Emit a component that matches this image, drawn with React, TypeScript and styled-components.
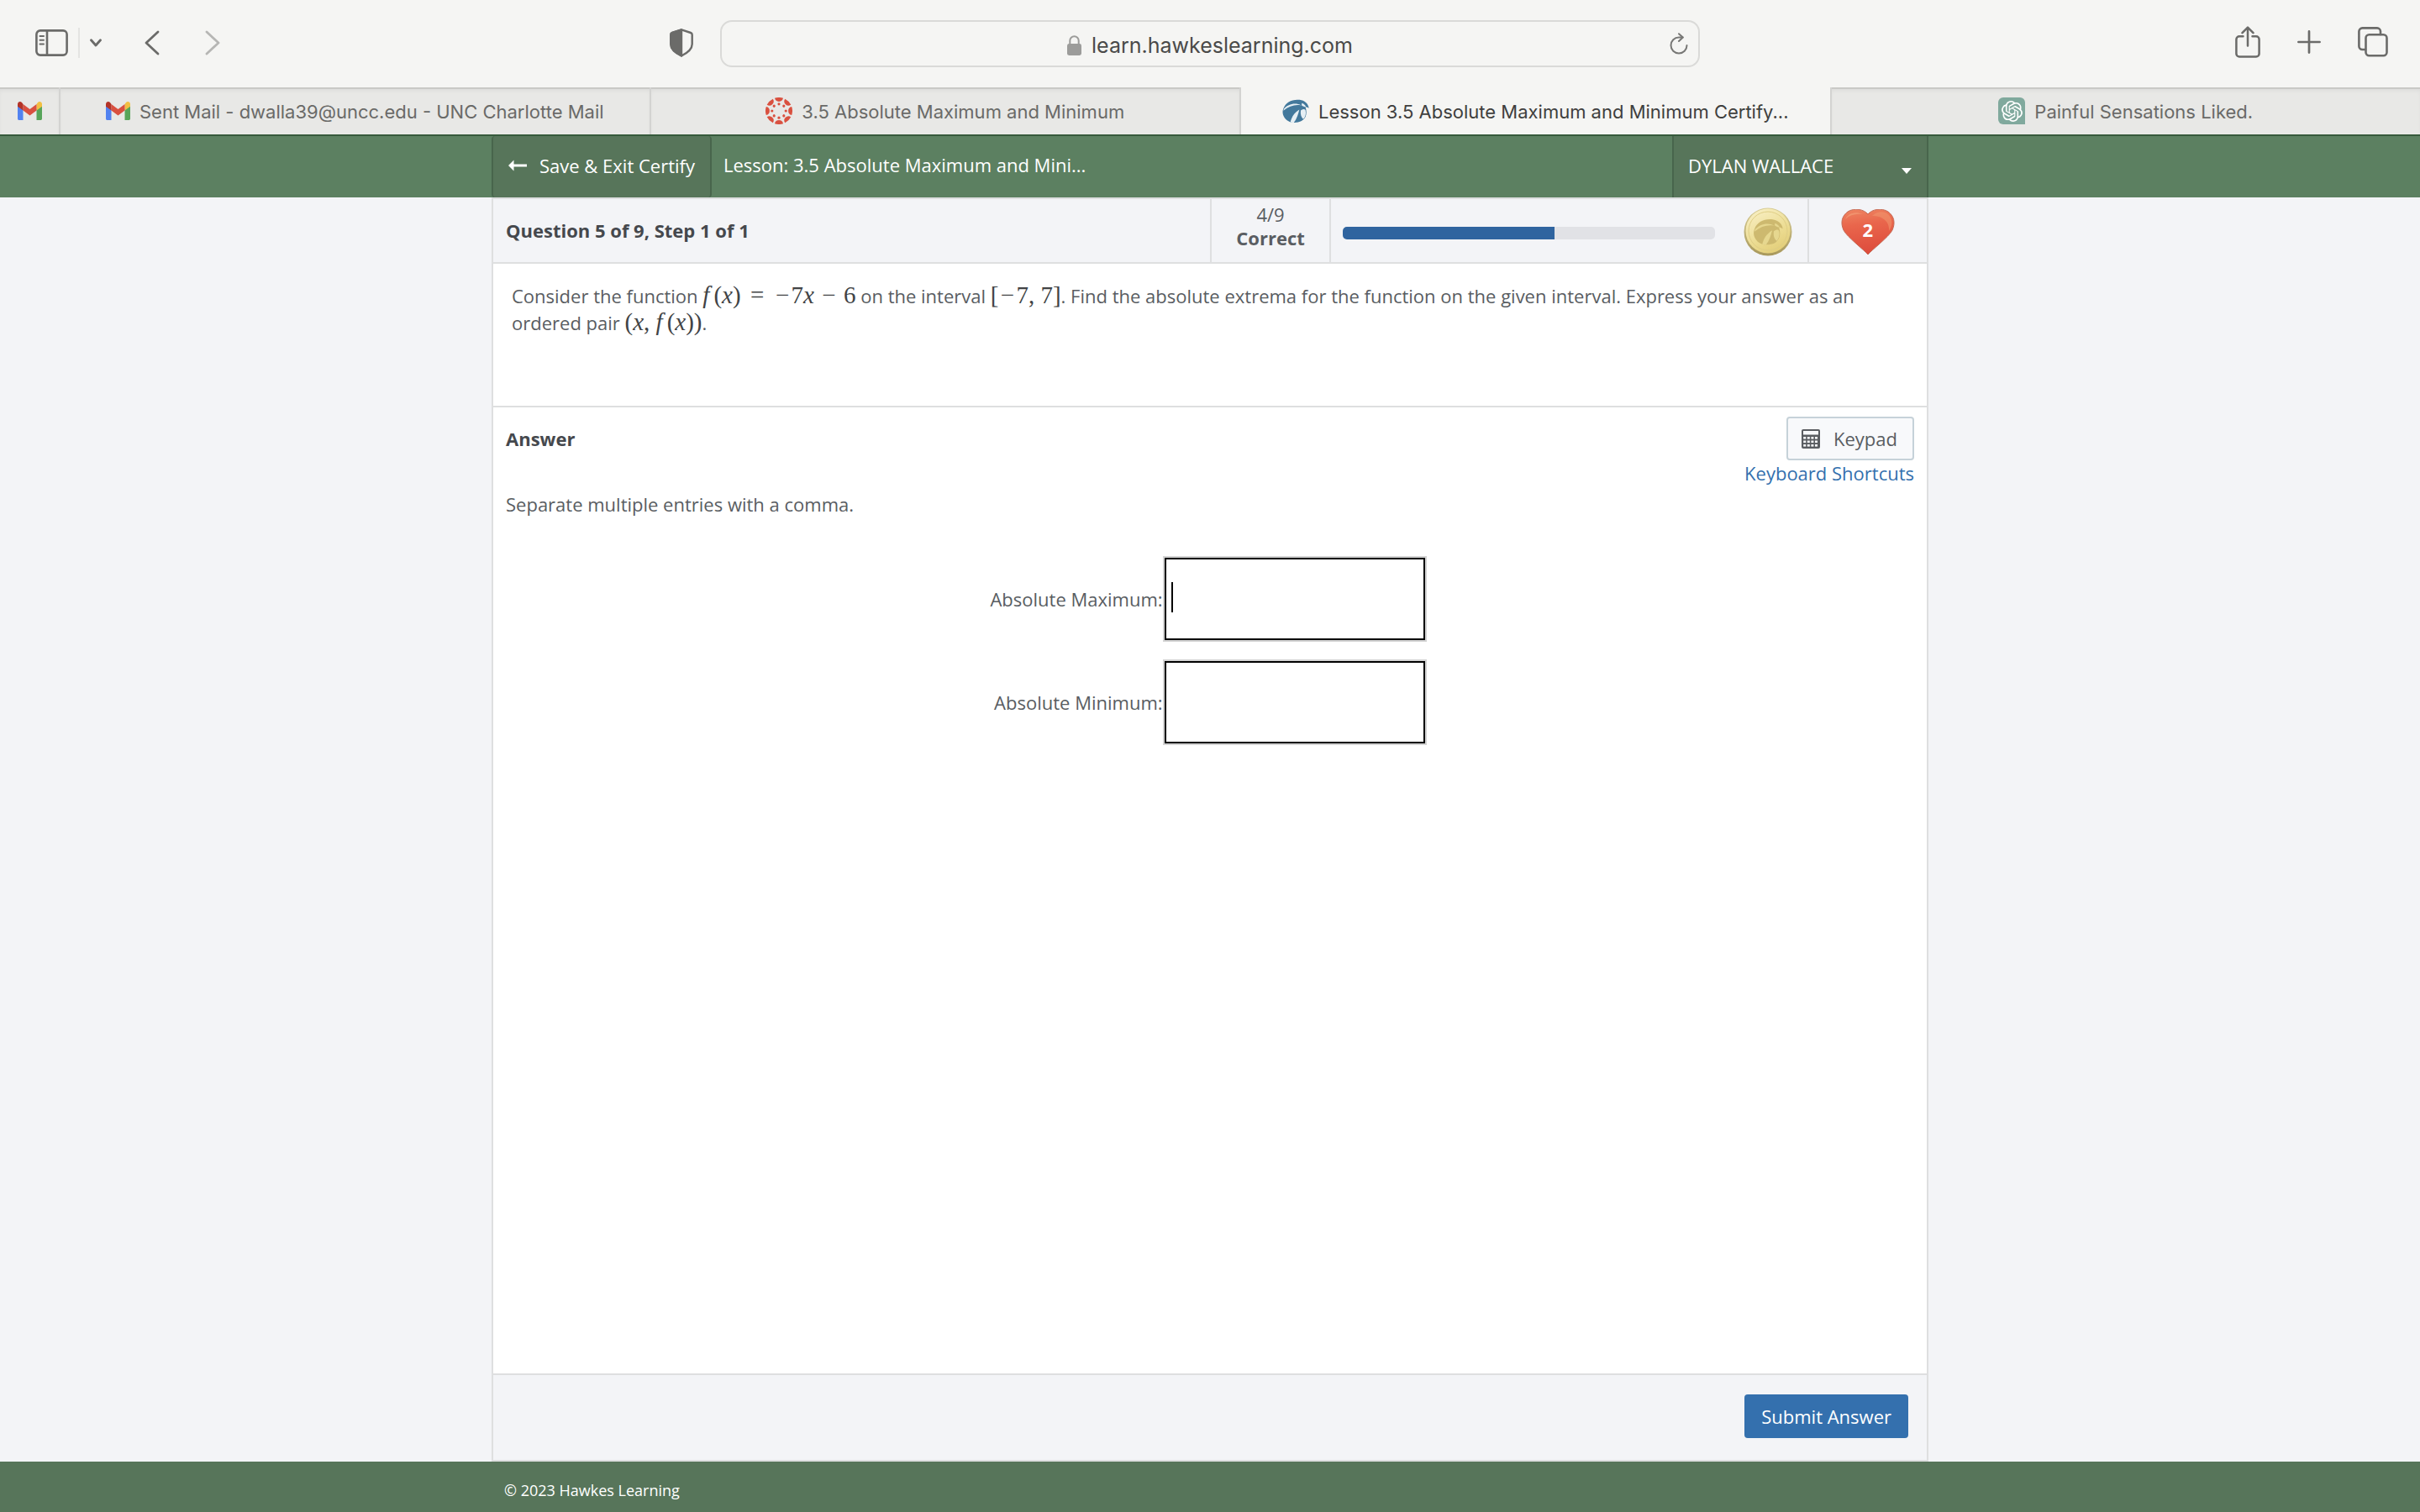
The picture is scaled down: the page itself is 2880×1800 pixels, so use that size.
import React, { useId } from "react";
import styled, { createGlobalStyle, css } from "styled-components";
import { SiOpenai } from "react-icons/si";

const color = {
  chrome: "#f5f5f3",
  tab: "#e8e8e6",
  chromeLine: "#d3d3d1",
  chromeIcon: "#6b6b69",
  green: "#5c8061",
  darkGreen: "#57755a",
  greenLine: "#48654c",
  page: "#f3f4f7",
  line: "#dedfe0",
  text: "#595d62",
  strong: "#45484d",
  link: "#3470ae",
};

const uiFont = `Inter, "Liberation Sans", sans-serif`;
const bodyFont = `"Open Sans", "Noto Sans", sans-serif`;

const GlobalStyle = createGlobalStyle`
  *, *::before, *::after { box-sizing: border-box; }
  body { margin: 0; background: ${color.page}; }
  button, input { font: inherit; color: inherit; }
  svg { display: block; flex: none; }
`;

const Page = styled.div`
  display: flex;
  flex-direction: column;
  min-height: 100vh;
  font-family: ${bodyFont};
  font-size: 22px;
  line-height: 32px;
  color: ${color.text};
`;

/* ---------- browser chrome ---------- */

const Toolbar = styled.header`
  display: grid;
  grid-template-columns: 1fr minmax(0, 1166px) 1fr;
  align-items: center;
  height: 104px;
  background: ${color.chrome};
  color: ${color.chromeIcon};
`;

const ToolGroup = styled.div<{ $end?: boolean }>`
  display: flex;
  align-items: center;
  justify-content: ${(p) => (p.$end ? "flex-end" : "flex-start")};
  gap: ${(p) => (p.$end ? "44px" : "0")};
  padding: ${(p) => (p.$end ? "0 38px 4px 0" : "0 32px 2px 42px")};
`;

const IconButton = styled.button<{ $space?: number; $push?: boolean }>`
  display: flex;
  padding: 0;
  border: 0;
  background: none;
  color: inherit;
  margin-left: ${(p) => (p.$push ? "auto" : `${p.$space ?? 0}px`)};
`;

const ToolDivider = styled.span`
  width: 2px;
  height: 36px;
  margin-left: 12px;
  background: #e4e4e2;
`;

const AddressBar = styled.div`
  display: grid;
  grid-template-columns: 1fr auto 1fr;
  align-items: center;
  height: 56px;
  padding: 0 12px;
  border: 2px solid #dadad8;
  border-radius: 14px;
  font-family: ${uiFont};
  font-size: 25px;
  color: #4a4a49;
`;

const Address = styled.span`
  display: flex;
  align-items: center;
  gap: 12px;
  grid-column: 2;
  padding-top: 3px;
`;

const ReloadSlot = styled.span`
  display: flex;
  justify-content: flex-end;
  color: #777775;
`;

const TabBar = styled.nav`
  display: flex;
  height: 56px;
  background: ${color.tab};
  font-family: ${uiFont};
  font-size: 22px;
`;

const Tab = styled.a<{ $pinned?: boolean; $active?: boolean }>`
  display: flex;
  align-items: center;
  justify-content: center;
  gap: 11px;
  min-width: 0;
  flex: ${(p) => (p.$pinned ? "0 0 72px" : "1 1 0")};
  border-right: 2px solid ${color.chromeLine};
  color: #6a6a68;
  text-decoration: none;
  white-space: nowrap;
  box-shadow: inset 0 2px 0 #c9c9c6, inset 0 5px 4px -1px #dcdcda;
  &:last-child { border-right: 0; }
  ${(p) =>
    p.$active &&
    css`
      background: ${color.chrome};
      box-shadow: none;
      color: #3f3f3e;
    `}
`;

const TabTitle = styled.span`
  padding-top: 2px;
`;

const ChatBadge = styled.span`
  display: flex;
  align-items: center;
  justify-content: center;
  width: 32px;
  height: 32px;
  border-radius: 6px 6px 0 6px;
  background: #80a99d;
  color: #fff;
`;

/* ---------- lesson header ---------- */

const column = css`
  width: 100%;
  max-width: 1710px;
  margin: 0 auto;
`;

const LessonBar = styled.div`
  background: ${color.green};
  border-top: 2px solid #365a3c;
  color: #fff;
`;

const LessonRow = styled.div`
  ${column}
  display: flex;
  height: 73px;
`;

const ExitButton = styled.button`
  display: flex;
  align-items: center;
  gap: 15px;
  padding: 0 18px 4px;
  border: 2px solid ${color.greenLine};
  border-width: 0 2px;
  border-radius: 4px;
  background: ${color.darkGreen};
`;

const LessonTitle = styled.h1`
  flex: 1;
  margin: 0;
  padding: 18px 14px;
  font-size: inherit;
  font-weight: 400;
`;

const UserMenu = styled.button`
  display: flex;
  align-items: center;
  justify-content: space-between;
  flex: 0 0 305px;
  padding: 0 18px 4px 17px;
  border: 2px solid ${color.greenLine};
  border-width: 0 2px;
  background: ${color.darkGreen};
`;

const Caret = styled.span`
  margin-top: 14px;
  border: 6px solid transparent;
  border-top: 7px solid #fff;
  border-bottom: 0;
`;

/* ---------- question panel ---------- */

const Panel = styled.main`
  ${column}
  display: flex;
  flex-direction: column;
  flex: 1;
  border: 2px solid ${color.line};
  background: #fff;
`;

const StatusRow = styled.div`
  display: grid;
  grid-template-columns: 6fr 1fr 4fr 1fr;
  height: 77px;
  border-bottom: 2px solid ${color.line};
  background: ${color.page};
`;

const StatusCell = styled.div<{ $center?: boolean }>`
  display: flex;
  align-items: center;
  justify-content: ${(p) => (p.$center ? "center" : "space-between")};
  padding: 0 14px;
  border-left: 2px solid ${color.line};
  &:first-child {
    border-left: 0;
    padding: 0 15px 2px;
  }
`;

const Heading = styled.h2`
  margin: 0;
  font-size: inherit;
  font-weight: 700;
  color: ${color.strong};
`;

const Score = styled.div`
  padding-bottom: 12px;
  text-align: center;
  line-height: 28px;
`;

const ScoreLabel = styled.strong`
  display: block;
`;

const Track = styled.div`
  flex: 1;
  height: 15px;
  margin: 6px 34px 0 0;
  border-radius: 5px;
  background: #e1e2e6;
  overflow: hidden;
`;

const Fill = styled.div`
  height: 100%;
  background: #2f649f;
`;

const CoinSlot = styled.span`
  margin: 3px 4px 0 0;
`;

const HeartSlot = styled.span`
  display: grid;
  place-items: center;
  padding-top: 3px;
  > * { grid-area: 1 / 1; }
  color: #fff;
`;

const HeartCount = styled.strong`
  padding-bottom: 6px;
`;

const Prompt = styled.p`
  min-height: 171px;
  margin: 0;
  padding: 22px;
  border-bottom: 2px solid ${color.line};
`;

const MathText = styled.span`
  font-family: "Liberation Serif", serif;
  font-size: 29px;
  line-height: 1;
  color: #414345;
  white-space: nowrap;
`;

const Fn = styled.i`
  margin-right: 5px;
`;

const Sign = styled.span<{ $gap?: number }>`
  display: inline-block;
  width: 21px;
  margin: 0 ${(p) => p.$gap ?? 0}px;
  text-align: center;
`;

const AnswerArea = styled.section`
  flex: 1;
  padding: 11px 15px;
`;

const AnswerHead = styled.div`
  display: flex;
  justify-content: space-between;
  align-items: flex-start;
  min-height: 86px;
`;

const AnswerTitle = styled(Heading)`
  padding-top: 10px;
`;

const Tools = styled.div`
  display: flex;
  flex-direction: column;
  align-items: flex-end;
`;

const KeypadButton = styled.button`
  display: flex;
  align-items: center;
  gap: 16px;
  height: 52px;
  padding: 0 18px 0 16px;
  border: 2px solid #c6d2d9;
  border-radius: 4px;
  background: #f8f9fb;
`;

const Link = styled.a`
  line-height: 30px;
  color: ${color.link};
  text-decoration: none;
`;

const Hint = styled.p`
  margin: 2px 0 46px;
`;

const Fields = styled.form`
  display: grid;
  grid-template-columns: max-content 314px;
  justify-content: center;
  align-items: center;
  row-gap: 21px;
  padding-right: 4px;
`;

const FieldLabel = styled.label`
  text-align: right;
`;

const FieldBox = styled.span`
  position: relative;
  display: flex;
`;

const Field = styled.input`
  width: 100%;
  height: 102px;
  padding: 0 8px;
  border: 2px solid #d3d3d3;
  border-radius: 0;
  outline: 2px solid #000;
  outline-offset: -4px;
  background: #fff;
`;

const TextCursor = styled.span`
  position: absolute;
  left: 10px;
  top: 31px;
  width: 2px;
  height: 36px;
  background: #000;
`;

const SubmitRow = styled.div`
  display: flex;
  justify-content: flex-end;
  align-items: center;
  height: 103px;
  padding: 0 22px 4px;
  border-top: 2px solid ${color.line};
  background: ${color.page};
`;

const SubmitButton = styled.button`
  height: 52px;
  padding: 0 20px;
  border: 0;
  border-radius: 4px;
  background: ${color.link};
  color: #fff;
`;

const Footer = styled.footer`
  background: ${color.darkGreen};
  color: #fff;
  font-size: 18px;
`;

const FooterText = styled.div`
  ${column}
  height: 60px;
  padding: 18px 15px;
`;

/* ---------- drawings ---------- */

const stroke = {
  fill: "none",
  stroke: "currentColor",
  strokeLinecap: "round" as const,
  strokeLinejoin: "round" as const,
};

const SidebarIcon = () => (
  <svg width="39" height="32" viewBox="0 0 39 32" {...stroke} strokeWidth="2.6">
    <rect x="1.4" y="1.4" width="36.2" height="29.2" rx="4.5" />
    <path d="M14 1.5v29" />
    <path d="M5.5 8h4.5M5.5 12.7h4.5M5.5 17.4h4.5" strokeWidth="2" />
  </svg>
);

const ChevronDown = () => (
  <svg width="14" height="10" viewBox="0 0 14 10" {...stroke} strokeWidth="2.8">
    <path d="M1.5 1.8 7 8l5.500-6.200" />
  </svg>
);

const Chevron = ({ forward = false }: { forward?: boolean }) => (
  <svg width="18" height="30" viewBox="0 0 18 30" {...stroke} strokeWidth="2.8" opacity={forward ? 0.45 : 1}>
    <path d={forward ? "M2 2l14 13L2 28" : "M16 2 2 15l14 13"} />
  </svg>
);

const ShieldIcon = () => (
  <svg width="28" height="34" viewBox="0 0 28 34" {...stroke} strokeWidth="2.4">
    <path d="M14 1.400 25 5c1.200.4 1.700 1 1.700 2.300v11.200c0 5.500-4.200 9.800-12.700 14-8.500-4.200-12.700-8.500-12.700-14V7.300C1.300 6 1.800 5.400 3 5z" />
    <path d="M14 1.400v31.100C5.500 28.300 1.300 24 1.300 18.500V7.300C1.300 6 1.800 5.400 3 5z" fill="currentColor" />
  </svg>
);

const LockIcon = () => (
  <svg width="17" height="24" viewBox="0 0 17 24" fill="#9c9c9a">
    <rect x="0" y="10" width="17" height="14" rx="2.400" />
    <path d="M3.300 11V6.500a5.200 5.200 0 0 1 10.400 0V11" fill="none" stroke="#9c9c9a" strokeWidth="2" />
  </svg>
);

const ReloadIcon = () => (
  <svg width="22" height="26" viewBox="0 0 22 26" {...stroke} strokeWidth="2">
    <path d="M20.500 15a9.500 9.500 0 1 1-9.500-9.500h4.500" />
    <path d="M11 1.200l4.800 4.300L11 10" />
  </svg>
);

const ShareIcon = () => (
  <svg width="30" height="38" viewBox="0 0 30 38" {...stroke} strokeWidth="2.500">
    <path d="M9.500 12.300H5a3.600 3.600 0 0 0-3.600 3.600v17A3.600 3.600 0 0 0 5 36.500h20a3.600 3.600 0 0 0 3.600-3.600v-17a3.600 3.600 0 0 0-3.600-3.600h-4.500" />
    <path d="M15 23.500V2M8.500 8.200 15 1.600l6.500 6.600" />
  </svg>
);

const PlusIcon = () => (
  <svg width="28" height="28" viewBox="0 0 28 28" {...stroke} strokeWidth="2.700">
    <path d="M14 1.400v25.200M1.400 14h25.200" />
  </svg>
);

const OverviewIcon = () => (
  <svg width="36" height="36" viewBox="0 0 36 36" {...stroke} strokeWidth="2.600">
    <rect x="9.500" y="9.300" width="25" height="25" rx="4" />
    <path d="M9 27H5.400a4 4 0 0 1-4-4V5.400a4 4 0 0 1 4-4H23a4 4 0 0 1 4 4V9" />
  </svg>
);

const GmailIcon = () => (
  <svg width="29" height="22" viewBox="0 0 29 22">
    <path d="M0 4v16.200c0 1 .8 1.800 1.800 1.800h4.700V9z" fill="#5282f0" />
    <path d="M29 4v16.200c0 1-.8 1.800-1.800 1.800h-4.700V9z" fill="#57a55a" />
    <path d="M22.500 3v7.600L29 5.800V3.100C29 .3 26-.8 24 .9z" fill="#f2bf42" />
    <path d="M6.500 10.600V3L14.500 9l8-6v7.600l-8 6z" fill="#d95040" />
    <path d="M0 3.100v2.700l6.500 4.800V3L5 .9C3-.8 0 .3 0 3.100z" fill="#b33428" />
  </svg>
);

const CanvasIcon = () => (
  <svg width="32" height="32" viewBox="0 0 32 32" fill="#d9503f">
    {[0, 45, 90, 135, 180, 225, 270, 315].map((angle) => (
      <g key={angle} transform={`rotate(${angle} 16 16)`}>
        <path d="M11 .8A16 16 0 0 1 21 .8 5.100 5.100 0 0 1 11 .8z" />
        <circle cx="16" cy="7.800" r="1.600" />
      </g>
    ))}
  </svg>
);

const HawkShape = ({ dark, light }: { dark: string; light: string }) => (
  <g>
    <path
      d="M28 81C8 74-4 52 4 33 12 11 35-1 62 2c17 2 31 13 33 30-5-4-9-5-12-4 6 20 3 36-9 46-6 5-11 7-18 8-9 2-19 2-28-1z"
      fill={dark}
    />
    <path d="M29 82c4-18 14-34 32-45-4 15-9 33-20 47z" fill={light} />
    <path d="M66 40c8-6 14-6 17-1 3 12 0 24-8 32-7-6-11-16-9-31z" fill={light} />
    <path d="M6 34c14-16 40-24 62-12-22-4-44 2-64 19z" fill={light} />
    <path d="M70 14c8 3 13 8 15 14-6-1-11-3-16-7z" fill={light} />
  </g>
);

const HawkIcon = () => (
  <svg width="32" height="29" viewBox="0 0 96 86">
    <HawkShape dark="#43799c" light="#e6eff4" />
  </svg>
);

const Coin = () => {
  const id = useId();
  return (
    <svg width="58" height="58" viewBox="0 0 58 58" role="img" aria-label="Mastery coin">
      <defs>
        <linearGradient id={`${id}rim`} x1="0" y1="0" x2="0" y2="1">
          <stop offset="0" stopColor="#d8cd96" />
          <stop offset="1" stopColor="#a8985c" />
        </linearGradient>
        <linearGradient id={`${id}face`} x1="0.200" y1="0" x2="0.700" y2="1">
          <stop offset="0" stopColor="#f8efc4" />
          <stop offset="0.600" stopColor="#ecdc92" />
          <stop offset="1" stopColor="#e2cd77" />
        </linearGradient>
      </defs>
      <circle cx="29" cy="29" r="28.500" fill={`url(#${id}rim)`} />
      <circle cx="29" cy="28" r="26.500" fill={`url(#${id}face)`} />
      <circle cx="29" cy="28" r="23" fill="none" stroke="#dfce86" />
      <g transform="translate(11.500 13.500) scale(.37)">
        <HawkShape dark="#cdb96f" light="#e6d78f" />
      </g>
    </svg>
  );
};

const Heart = () => {
  const id = useId();
  return (
    <svg width="64" height="55" viewBox="0 0 64 55" aria-hidden="true">
      <defs>
        <linearGradient id={id} x1="0.200" y1="0" x2="0.350" y2="1">
          <stop offset="0" stopColor="#ee8360" />
          <stop offset="0.350" stopColor="#e9664c" />
          <stop offset="1" stopColor="#dd4b3c" />
        </linearGradient>
      </defs>
      <path
        d="M32 54C28 49 7 33 3 25-1 16 1 8 8 3c8-5 19-3 24 3 5-6 16-8 24-3 7 5 9 13 5 22-4 8-25 24-29 29z"
        fill={`url(#${id})`}
        stroke="#c46a55"
        strokeWidth="1"
      />
      <path d="M37 8c6-6 15-6 20-1 5 6 4 13 0 19 1-9-5-18-20-18z" fill="#f0946c" opacity="0.600" />
      <path d="M5 12C8 5 17 2 26 6 17 5 10 7 5 12z" fill="#f4a37c" opacity="0.600" />
    </svg>
  );
};

const ArrowLeft = () => (
  <svg width="22" height="14" viewBox="0 0 22 14" fill="currentColor">
    <path d="M0 7l6.500-6.500V5.400H22v3.200H6.500v4.900z" />
  </svg>
);

const CalculatorIcon = () => (
  <svg width="22" height="23" viewBox="0 0 22 23">
    <rect x="0" y="0" width="22" height="23" rx="2" fill="#5a5d61" />
    <rect x="2" y="2" width="18" height="4.500" fill="#f8f9fb" />
    {[9, 13.500, 18].map((y) =>
      [2.200, 6.800, 11.400, 16].map((x) => (
        <rect key={`${x}-${y}`} x={x} y={y} width="3" height="2.600" fill="#f8f9fb" />
      )),
    )}
  </svg>
);

/* ---------- page ---------- */

const answers = [
  { id: "absolute-maximum", label: "Absolute Maximum:", active: true },
  { id: "absolute-minimum", label: "Absolute Minimum:", active: false },
];

const progress = 57;

export default function App() {
  return (
    <Page>
      <GlobalStyle />
      <Toolbar>
        <ToolGroup>
          <IconButton aria-label="Show sidebar"><SidebarIcon /></IconButton>
          <ToolDivider />
          <IconButton $space={12} aria-label="Tab groups"><ChevronDown /></IconButton>
          <IconButton $space={51} aria-label="Back"><Chevron /></IconButton>
          <IconButton $space={54} aria-label="Forward"><Chevron forward /></IconButton>
          <IconButton $push aria-label="Privacy report"><ShieldIcon /></IconButton>
        </ToolGroup>
        <AddressBar>
          <Address>
            <LockIcon />
            learn.hawkeslearning.com
          </Address>
          <ReloadSlot>
            <IconButton aria-label="Reload"><ReloadIcon /></IconButton>
          </ReloadSlot>
        </AddressBar>
        <ToolGroup $end>
          <IconButton aria-label="Share"><ShareIcon /></IconButton>
          <IconButton aria-label="New tab"><PlusIcon /></IconButton>
          <IconButton aria-label="Tab overview"><OverviewIcon /></IconButton>
        </ToolGroup>
      </Toolbar>
      <TabBar>
        <Tab $pinned href="#" aria-label="Gmail"><GmailIcon /></Tab>
        <Tab href="#">
          <GmailIcon />
          <TabTitle>Sent Mail - dwalla39@uncc.edu - UNC Charlotte Mail</TabTitle>
        </Tab>
        <Tab href="#">
          <CanvasIcon />
          <TabTitle>3.5 Absolute Maximum and Minimum</TabTitle>
        </Tab>
        <Tab $active href="#">
          <HawkIcon />
          <TabTitle>Lesson 3.5 Absolute Maximum and Minimum Certify...</TabTitle>
        </Tab>
        <Tab href="#">
          <ChatBadge><SiOpenai size={25} /></ChatBadge>
          <TabTitle>Painful Sensations Liked.</TabTitle>
        </Tab>
      </TabBar>

      <LessonBar>
        <LessonRow>
          <ExitButton><ArrowLeft />Save &amp; Exit Certify</ExitButton>
          <LessonTitle>Lesson: 3.5 Absolute Maximum and Mini...</LessonTitle>
          <UserMenu>DYLAN WALLACE<Caret /></UserMenu>
        </LessonRow>
      </LessonBar>

      <Panel>
        <StatusRow>
          <StatusCell><Heading>Question 5 of 9, Step 1 of 1</Heading></StatusCell>
          <StatusCell $center>
            <Score>4/9<ScoreLabel>Correct</ScoreLabel></Score>
          </StatusCell>
          <StatusCell>
            <Track role="progressbar" aria-valuenow={progress} aria-label="Progress">
              <Fill style={{ width: `${progress}%` }} />
            </Track>
            <CoinSlot><Coin /></CoinSlot>
          </StatusCell>
          <StatusCell $center>
            <HeartSlot><Heart /><HeartCount>2</HeartCount></HeartSlot>
          </StatusCell>
        </StatusRow>

        <Prompt>
          Consider the function{" "}
          <MathText>
            <Fn>f</Fn>(<i>x</i>)<Sign $gap={9}>=</Sign><Sign>−</Sign>7<i>x</i><Sign $gap={7}>−</Sign>6
          </MathText>{" "}
          on the interval <MathText>[<Sign>−</Sign>7, 7]</MathText>. Find the absolute extrema for the
          function on the given interval. Express your answer as an ordered pair{" "}
          <MathText>(<i>x</i>, <Fn>f</Fn>(<i>x</i>))</MathText>.
        </Prompt>

        <AnswerArea>
          <AnswerHead>
            <AnswerTitle>Answer</AnswerTitle>
            <Tools>
              <KeypadButton><CalculatorIcon />Keypad</KeypadButton>
              <Link href="#">Keyboard Shortcuts</Link>
            </Tools>
          </AnswerHead>
          <Hint>Separate multiple entries with a comma.</Hint>
          <Fields>
            {answers.map((a) => (
              <React.Fragment key={a.id}>
                <FieldLabel htmlFor={a.id}>{a.label}</FieldLabel>
                <FieldBox>
                  <Field id={a.id} type="text" />
                  {a.active && <TextCursor />}
                </FieldBox>
              </React.Fragment>
            ))}
          </Fields>
        </AnswerArea>

        <SubmitRow>
          <SubmitButton>Submit Answer</SubmitButton>
        </SubmitRow>
      </Panel>

      <Footer>
        <FooterText>© 2023 Hawkes Learning</FooterText>
      </Footer>
    </Page>
  );
}
